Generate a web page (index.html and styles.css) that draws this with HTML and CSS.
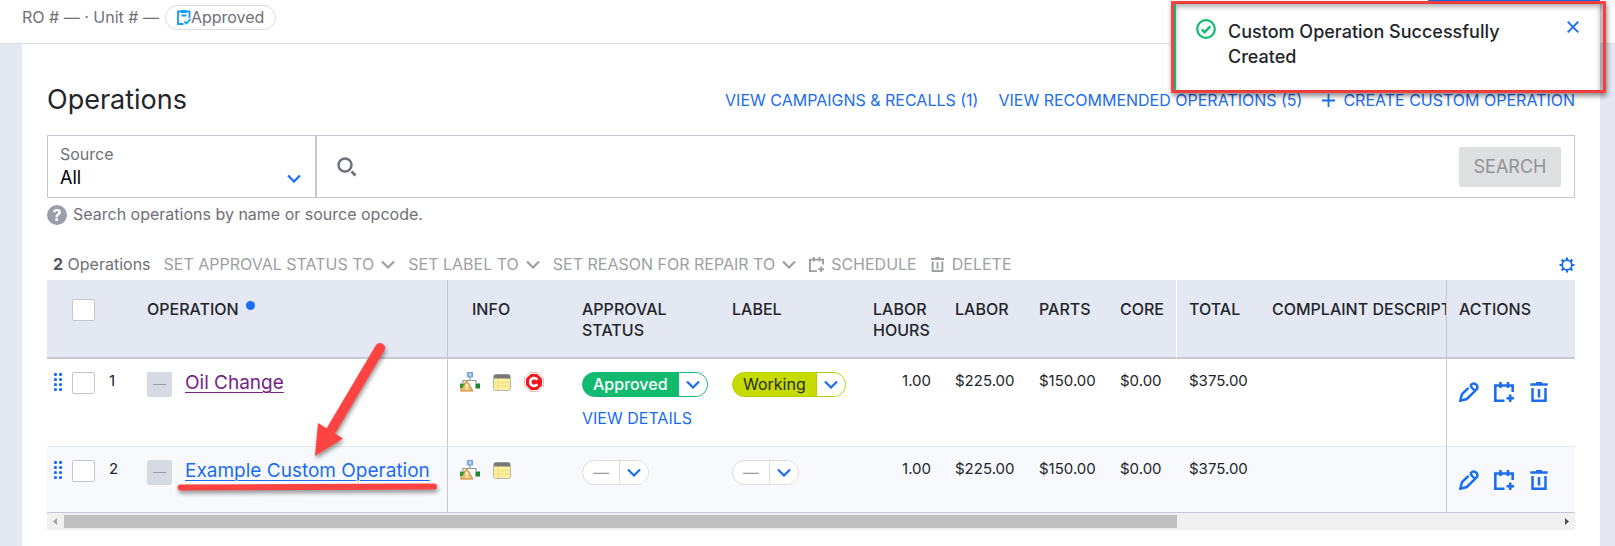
FILE: index.html
```html
<!DOCTYPE html>
<html lang="en">
<head>
<meta charset="utf-8">
<title>Operations</title>
<link rel="stylesheet" href="styles.css">
</head>
<body>
<svg class="sprite" aria-hidden="true">
  <symbol id="chevron" viewBox="0 0 14 9"><path d="M1 1.500l6 6 6-6" fill="none" stroke="currentColor" stroke-width="2.200"/></symbol>
  <symbol id="calendar" viewBox="0 0 20 20"><path d="M10.500 18.800H1.300V3.500h17.400V10M6.500 0v6M14 0v6M16.200 12.500v7.500M12.500 16.200H20" fill="none" stroke="currentColor" stroke-width="2.600"/></symbol>
  <symbol id="trash" viewBox="0 0 18 20"><path d="M.3 2.600h17.400M6 1.200h6M2.500 6v12.700h13V6M9 7v8.500" fill="none" stroke="currentColor" stroke-width="2.500"/></symbol>
  <symbol id="pencil" viewBox="0 0 20 20"><path d="M9.500 5.800L3 12.200l-1.700 6.500L7.800 17 17.700 7.300a3.600 3.600 0 0 0-5-5L11.300 3.700M11.300 3.700c1.500 2.500 2.500 3.500 5 5" fill="none" stroke="currentColor" stroke-width="2.500"/></symbol>
  <symbol id="grip" viewBox="0 0 8 18"><g fill="currentColor"><circle cx="1.500" cy="1.500" r="1.600"/><circle cx="6.500" cy="1.500" r="1.600"/><circle cx="1.500" cy="6.500" r="1.600"/><circle cx="6.500" cy="6.500" r="1.600"/><circle cx="1.500" cy="11.500" r="1.600"/><circle cx="6.500" cy="11.500" r="1.600"/><circle cx="1.500" cy="16.500" r="1.600"/><circle cx="6.500" cy="16.500" r="1.600"/></g></symbol>
  <symbol id="tree" viewBox="0 0 20 20"><path d="M10 5v3M3 11V8.500h13V11" fill="none" stroke="#999" stroke-width="1.200"/><path d="M7.500.5h5v4.500h-5z" fill="#8fb6ee" stroke="#6d9ce0"/><path d="M9 1.500h2v2H9z" fill="#cfe2fb"/><path d="M0 11.500h5v5H0z" fill="#2f9440"/><path d="M15.500 11.500h4.500v5h-4.500z" fill="#1d8430"/><path d="M6.700 8.500L13 19H.5z" fill="#f0c56c" stroke="#c88a3a"/><path d="M6.700 12v3.500M6.700 16.500V18" stroke="#fff" stroke-width="1.600"/></symbol>
  <symbol id="note" viewBox="0 0 18 17"><rect x=".5" y=".5" width="17" height="16" rx="2" fill="#fbf0a0" stroke="#b9b9b0"/><path d="M1 2.500Q1 .5 3 .5h12q2 0 2 2V4.500H1z" fill="#777"/><path d="M5.500 5v11M1 8.500h16M1 12h16" stroke="#f4dc80" fill="none"/></symbol>
</svg>

<header class="topbar">
  <span>RO # — · Unit # —</span>
  <span class="chip">
    <svg class="chip-icon" viewBox="0 0 14 15" aria-hidden="true"><path d="M6.500 14H1V1.500h11.500V8M4.500 5.500h5M7.500 11.500l2 2 4-4.500" fill="none" stroke="currentColor" stroke-width="1.800"/><path d="M4 0h5.500v3H4z" fill="currentColor"/></svg>Approved
  </span>
  <button class="primary" type="button" aria-label="Primary action"></button>
</header>

<main class="panel">
  <div class="title-row">
    <h1>Operations</h1>
    <nav class="links">
      <a href="#">VIEW CAMPAIGNS &amp; RECALLS (1)</a>
      <a href="#">VIEW RECOMMENDED OPERATIONS (5)</a>
      <a class="create" href="#"><svg class="plus" viewBox="0 0 13 13" aria-hidden="true"><path d="M6.500 0v13M0 6.500h13" stroke="currentColor" stroke-width="1.800"/></svg>CREATE CUSTOM OPERATION</a>
    </nav>
  </div>

  <form class="search">
    <div class="source">
      <label for="source">Source</label>
      <select id="source"><option>All</option></select>
      <svg class="chevron blue" aria-hidden="true"><use href="#chevron"/></svg>
    </div>
    <svg class="lens" viewBox="0 0 20 20" aria-hidden="true"><circle cx="8" cy="8" r="6.500" fill="none" stroke="currentColor" stroke-width="2.400"/><path d="M14.500 14.500l4 4" stroke="currentColor" stroke-width="2.800"/></svg>
    <input class="query" type="text" aria-label="Search operations">
    <button class="search-button" type="button">SEARCH</button>
  </form>
  <p class="hint"><span class="help">?</span>Search operations by name or source opcode.</p>

  <div class="toolbar">
    <span class="count"><b>2</b> Operations</span>
    <button type="button">SET APPROVAL STATUS TO <svg class="chevron" aria-hidden="true"><use href="#chevron"/></svg></button>
    <button type="button">SET LABEL TO <svg class="chevron" aria-hidden="true"><use href="#chevron"/></svg></button>
    <button type="button">SET REASON FOR REPAIR TO <svg class="chevron" aria-hidden="true"><use href="#chevron"/></svg></button>
    <button type="button"><svg class="tool-icon" aria-hidden="true"><use href="#calendar"/></svg> SCHEDULE</button>
    <button type="button"><svg class="tool-icon" aria-hidden="true"><use href="#trash"/></svg> DELETE</button>
    <button class="settings" type="button" aria-label="Table settings"><svg class="gear" viewBox="0 0 16 16" aria-hidden="true"><circle cx="8" cy="8" r="4.800" fill="none" stroke="currentColor" stroke-width="1.800"/><path d="M8 .5v2.500M8 13v2.500M.5 8H3M13 8h2.500M2.600 2.600l1.800 1.800M11.600 11.600l1.800 1.800M13.400 2.600l-1.800 1.800M4.400 11.600l-1.800 1.800" stroke="currentColor" stroke-width="2.200"/></svg></button>
  </div>

  <table class="grid">
    <colgroup>
      <col class="c-grip"><col class="c-check"><col class="c-num"><col class="c-operation"><col class="c-info"><col class="c-approval"><col class="c-label"><col class="c-hours"><col class="c-labor"><col class="c-parts"><col class="c-core"><col class="c-total"><col><col class="c-actions">
    </colgroup>
    <thead>
      <tr>
        <th class="flush"></th>
        <th class="flush"><input type="checkbox" aria-label="Select all operations"></th>
        <th class="flush"></th>
        <th class="flush divide">OPERATION <span class="dot"></span></th>
        <th class="info-head">INFO</th>
        <th>APPROVAL<br>STATUS</th>
        <th>LABEL</th>
        <th>LABOR<br>HOURS</th>
        <th>LABOR</th>
        <th>PARTS</th>
        <th class="light-edge">CORE</th>
        <th>TOTAL</th>
        <th class="divide complaint" aria-label="Complaint description">COMPLAINT DESCRIPT</th>
        <th>ACTIONS</th>
      </tr>
    </thead>
    <tbody>
      <tr>
        <td class="flush grip-cell"><svg class="grip" aria-hidden="true"><use href="#grip"/></svg></td>
        <td class="flush"><input type="checkbox" aria-label="Select Oil Change"></td>
        <td class="flush num">1</td>
        <td class="flush divide"><div class="name"><button class="collapse" type="button" aria-label="Collapse">—</button><a class="visited" href="#">Oil Change</a></div></td>
        <td><div class="info"><svg class="tree"><use href="#tree"/></svg><svg class="note"><use href="#note"/></svg><svg class="stop" viewBox="0 0 20 20"><path d="M6 .5h8L19.500 6v8L14 19.500H6L.5 14V6z" fill="#fff" stroke="#f7b5b5"/><path d="M6.800 2h6.400L18 6.800v6.400L13.200 18H6.800L2 13.200V6.800z" fill="#f5161b"/><path d="M13.300 7.800A3.900 3.900 0 1 0 13.300 12.200" fill="none" stroke="#fff" stroke-width="2.600"/></svg></div></td>
        <td>
          <button class="pill approved" type="button"><span>Approved</span><i><svg class="chevron" aria-hidden="true"><use href="#chevron"/></svg></i></button>
          <a class="details" href="#">VIEW DETAILS</a>
        </td>
        <td><button class="pill working" type="button"><span>Working</span><i><svg class="chevron" aria-hidden="true"><use href="#chevron"/></svg></i></button></td>
        <td class="num right">1.00</td>
        <td class="num">$225.00</td>
        <td class="num">$150.00</td>
        <td class="num">$0.00</td>
        <td class="num">$375.00</td>
        <td class="divide"></td>
        <td class="action-cell"><div class="actions"><button type="button" aria-label="Edit"><svg><use href="#pencil"/></svg></button><button type="button" aria-label="Schedule"><svg><use href="#calendar"/></svg></button><button type="button" aria-label="Delete"><svg><use href="#trash"/></svg></button></div></td>
      </tr>
      <tr>
        <td class="flush grip-cell"><svg class="grip" aria-hidden="true"><use href="#grip"/></svg></td>
        <td class="flush"><input type="checkbox" aria-label="Select Example Custom Operation"></td>
        <td class="flush num">2</td>
        <td class="flush divide"><div class="name"><button class="collapse" type="button" aria-label="Collapse">—</button><a href="#">Example Custom Operation</a></div></td>
        <td><div class="info"><svg class="tree"><use href="#tree"/></svg><svg class="note"><use href="#note"/></svg></div></td>
        <td><button class="pill" type="button"><span>—</span><i><svg class="chevron" aria-hidden="true"><use href="#chevron"/></svg></i></button></td>
        <td><button class="pill" type="button"><span>—</span><i><svg class="chevron" aria-hidden="true"><use href="#chevron"/></svg></i></button></td>
        <td class="num right">1.00</td>
        <td class="num">$225.00</td>
        <td class="num">$150.00</td>
        <td class="num">$0.00</td>
        <td class="num">$375.00</td>
        <td class="divide"></td>
        <td class="action-cell"><div class="actions"><button type="button" aria-label="Edit"><svg><use href="#pencil"/></svg></button><button type="button" aria-label="Schedule"><svg><use href="#calendar"/></svg></button><button type="button" aria-label="Delete"><svg><use href="#trash"/></svg></button></div></td>
      </tr>
    </tbody>
  </table>
  <div class="scrollbar">
    <svg class="scroll-arrow" viewBox="0 0 17 17" aria-hidden="true"><path d="M10 5v7L6 8.500z" fill="#a3a3a3"/></svg>
    <div class="track"><div class="thumb"></div></div>
    <svg class="scroll-arrow" viewBox="0 0 17 17" aria-hidden="true"><path d="M7 5v7l4-3.500z" fill="#505050"/></svg>
  </div>
</main>

<aside class="toast" role="status">
  <div class="toast-body">
    <svg class="ok" viewBox="0 0 20 20" aria-hidden="true"><circle cx="10" cy="10" r="8.800" fill="none" stroke="currentColor" stroke-width="2.200"/><path d="M5.800 10.300l2.900 2.900 5.600-5.800" fill="none" stroke="currentColor" stroke-width="2.400"/></svg>
    <p>Custom Operation Successfully Created</p>
    <button type="button" aria-label="Close"><svg class="close" viewBox="0 0 12 12"><path d="M.7.7l10.600 10.600M11.300.7L.7 11.300" stroke="currentColor" stroke-width="1.900"/></svg></button>
  </div>
</aside>

<svg class="annotation" viewBox="0 0 270 170" aria-hidden="true">
  <path d="M210 18L162 99" stroke="#ff4242" stroke-width="10" stroke-linecap="round"/>
  <path d="M148 93L173 108.500 145 126z" fill="#ff4242"/>
  <path d="M10.500 157.500L264 156.500" stroke="#ff4242" stroke-width="6" stroke-linecap="round"/>
</svg>
</body>
</html>
```
FILE: styles.css
```css
* { box-sizing: border-box; }

body {
  --blue: #1a6dee;
  --muted: #6f7078;
  --line: #c5c8d3;
  --red: #ff4242;
  margin: 0;
  min-height: 100vh;
  display: flex;
  flex-direction: column;
  background: #e3e8f3;
  color: #23252b;
  font: 16px/21px Inter, "Open Sans", sans-serif;
  overflow: hidden;
}

h1, p { margin: 0; }
a { color: var(--blue); text-decoration: none; }
button { padding: 0; border: 0; background: none; color: inherit; font: inherit; }
svg { display: block; flex: none; }
.sprite { position: absolute; width: 0; height: 0; }

.topbar {
  position: relative;
  display: flex;
  align-items: flex-start;
  gap: 6px;
  height: 44px;
  padding: 5px 22px 0;
  border-bottom: 1px solid #dcdde2;
  background: #fff;
  color: var(--muted);
  line-height: 25px;
}
.chip {
  display: flex;
  align-items: center;
  height: 25px;
  padding: 0 11px;
  border: 1px solid #dcdde0;
  border-radius: 13px;
}
.chip-icon { width: 14px; height: 15px; color: #109bf5; }
.primary {
  position: absolute;
  top: 0;
  right: 15px;
  width: 172px;
  height: 2px;
  background: var(--blue);
}

.panel {
  flex: 1;
  margin: 0 15px 0 22px;
  padding: 36px 25px 16px;
  background: #fff;
}
.title-row {
  display: flex;
  align-items: center;
  justify-content: space-between;
  height: 40px;
}
h1 { font-size: 27px; line-height: 36px; font-weight: 400; }
.links { display: flex; gap: 20px; }
.create { display: flex; align-items: center; gap: 8px; }
.plus { width: 13px; height: 13px; }

.search {
  display: flex;
  align-items: center;
  height: 63px;
  margin-top: 15px;
  padding-right: 13px;
  border: 1px solid var(--line);
}
.source {
  position: relative;
  width: 269px;
  height: 100%;
  padding: 8px 13px 0 12px;
  border-right: 2px solid var(--line);
}
.source label { display: block; color: var(--muted); }
.source select {
  width: 100%;
  height: 26px;
  padding: 0;
  border: 0;
  background: none;
  color: #000;
  font: inherit;
  font-size: 18px;
  line-height: 26px;
  appearance: none;
}
.source .chevron { position: absolute; right: 14px; bottom: 14px; pointer-events: none; }
.chevron { width: 14px; height: 9px; }
.blue { color: var(--blue); }
.lens { width: 20px; height: 20px; margin-left: 20px; color: #6d6f7b; }
.query { flex: 1; height: 40px; margin: 0 12px; border: 0; outline: 0; font: inherit; }
.search-button {
  width: 102px;
  height: 40px;
  border-radius: 2px;
  background: #dedfe1;
  color: #919397;
  font-size: 18px;
}

.hint {
  display: flex;
  align-items: center;
  gap: 6px;
  margin-top: 6px;
  color: var(--muted);
}
.help {
  width: 20px;
  border-radius: 50%;
  background: #9a9eab;
  color: #fff;
  font-weight: 700;
  line-height: 20px;
  text-align: center;
}

.toolbar {
  display: flex;
  align-items: center;
  gap: 13px;
  height: 31px;
  margin-top: 24px;
  padding-left: 6px;
  color: #9d9fa4;
}
.toolbar button { display: flex; align-items: center; gap: 7px; }
.count { color: var(--muted); }
.count b { color: #55575e; }
.tool-icon { width: 15px; height: 15px; }
.toolbar .settings { margin-left: auto; color: var(--blue); }
.gear { width: 16px; height: 16px; }

.grid { width: 100%; table-layout: fixed; border-collapse: separate; border-spacing: 0; }
.c-grip { width: 25px; }
.c-check { width: 37px; }
.c-num { width: 38px; }
.c-operation { width: 301px; }
.c-info { width: 122px; }
.c-approval { width: 150px; }
.c-label { width: 141px; }
.c-hours { width: 82px; }
.c-labor { width: 84px; }
.c-parts { width: 81px; }
.c-core { width: 69px; }
.c-total { width: 83px; }
.c-actions { width: 128px; }

th {
  height: 79px;
  padding: 19px 12px 0;
  border-bottom: 2px solid #c7cad3;
  background: #e3e8f3;
  font-weight: 500;
  text-align: left;
  vertical-align: top;
  white-space: nowrap;
}
td { height: 66px; padding: 13px 12px 16px; vertical-align: top; }
tbody tr:first-child td { height: 88px; border-bottom: 1px solid #e2e7ee; }
tbody tr:last-child td { border-bottom: 1px solid var(--line); background: #f8f9fd; }
.grid .flush { padding-left: 0; padding-right: 0; }
.grid .divide { border-right: 1px solid var(--line); }
.grid .light-edge { border-right: 1px solid #fff; }
.info-head { padding-left: 24px; }
.complaint { padding-right: 0; overflow: hidden; }
.dot {
  display: inline-block;
  width: 9px;
  height: 9px;
  margin-left: 3px;
  border-radius: 50%;
  background: var(--blue);
  vertical-align: 5px;
}
input[type="checkbox"] {
  display: block;
  width: 23px;
  height: 22px;
  margin: 0;
  border: 1px solid #c3c6cf;
  border-radius: 2px;
  background: #fff;
  appearance: none;
}
td.num { padding-top: 11px; font-size: 15px; }
.right { text-align: right; }
.grip-cell { color: var(--blue); }
.grip { width: 8px; height: 18px; margin: 1px 0 0 7px; }
.name { display: flex; gap: 13px; font-size: 19px; }
.name a { text-decoration: underline; text-decoration-thickness: 1px; text-underline-offset: 3px; }
.name .visited { color: #762385; }
.collapse {
  width: 25px;
  height: 25px;
  border-radius: 2px;
  background: #d5dae3;
  color: #989ca6;
  font-size: 13px;
}
.info { display: flex; gap: 13px; }
.tree, .stop { width: 20px; height: 20px; }
.note { width: 18px; height: 17px; margin-top: 2px; }

.pill {
  display: flex;
  height: 25px;
  border: 1px solid #d9dbde;
  border-radius: 13px;
  background: #fff;
  color: #9b9ea3;
  line-height: 23px;
  overflow: hidden;
}
.pill span { padding: 0 10px; }
.pill i {
  display: grid;
  place-items: center;
  width: 29px;
  border-left: 1px solid #d9dbde;
  background: #fff;
  color: var(--blue);
}
.approved { border-color: #12ba70; background: #12ba70; color: #fff; font-weight: 500; }
.approved i { border-color: #12ba70; }
.working { border-color: #b7cc0b; background: #c6db00; color: #2a2d20; }
.working i { border-color: #b7cc0b; }
.details { display: block; margin-top: 11px; }

.actions { display: flex; gap: 15px; padding-top: 10px; color: var(--blue); }
.actions svg { width: 20px; height: 20px; }

.scrollbar { display: flex; height: 17px; background: #f0f0f1; }
.scroll-arrow { width: 17px; height: 17px; }
.track { flex: 1; padding: 2px 0; }
.thumb { width: 74.5%; height: 13px; background: #c0c0c0; }

/* Notification floating over the page header */
.toast {
  position: absolute;
  top: 1px;
  right: 9px;
  width: 435px;
  border: 3px solid var(--red);
  box-shadow: 1px 3px 5px rgba(0, 0, 0, .45), inset 0 3px 5px rgba(0, 0, 0, .35);
}
.toast-body {
  display: flex;
  align-items: flex-start;
  min-height: 86px;
  margin-right: 3px;
  padding: 15px 21px 0 20px;
  border-left: 2px solid #12ba70;
  background: #fff;
  box-shadow: inset 0 3px 5px rgba(0, 0, 0, .3), 2px 0 4px rgba(0, 0, 0, .3);
}
.toast p { flex: 1; margin: 0 40px 0 12px; font-size: 18px; line-height: 25px; font-weight: 500; }
.ok { width: 20px; height: 20px; color: #12ba70; }
.close { width: 12px; height: 12px; margin-top: 2px; color: var(--blue); }

/* Arrow and underline drawn over the table */
.annotation {
  position: absolute;
  top: 330px;
  left: 170px;
  width: 270px;
  height: 170px;
  filter: drop-shadow(1px 3px 2px rgba(0, 0, 0, .4));
  pointer-events: none;
}
```
